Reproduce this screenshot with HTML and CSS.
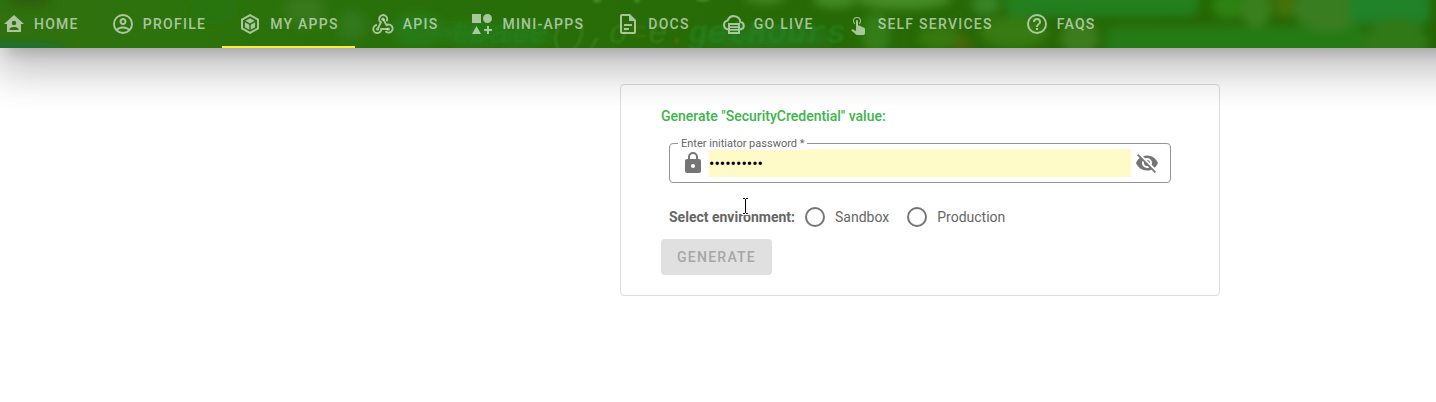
FILE: index.html
```html
<!DOCTYPE html>
<html lang="en">
<head>
<meta charset="utf-8">
<meta name="viewport" content="width=device-width, initial-scale=1">
<title>My Apps</title>
<link rel="stylesheet" href="styles.css">
</head>
<body>
<div class="page">
<header class="topbar">
  <svg class="backdrop" viewBox="0 0 1436 48" preserveAspectRatio="xMidYMid slice" aria-hidden="true">
    <defs>
      <linearGradient id="base" x1="0" x2="1" y1="0" y2="0">
        <stop offset="0" stop-color="#30700f"/>
        <stop offset="0.12" stop-color="#2d730c"/>
        <stop offset="0.25" stop-color="#29700a"/>
        <stop offset="0.5" stop-color="#276b06"/>
        <stop offset="1" stop-color="#246503"/>
      </linearGradient>
      <filter id="soft" x="-20%" y="-50%" width="140%" height="200%"><feGaussianBlur stdDeviation="6"/></filter>
      <filter id="mid" x="-20%" y="-50%" width="140%" height="200%" color-interpolation-filters="sRGB"><feGaussianBlur stdDeviation="5"/></filter>
      <filter id="fine" x="-20%" y="-50%" width="140%" height="200%"><feGaussianBlur stdDeviation="1"/></filter>
    </defs>
    <rect width="1436" height="48" fill="url(#base)"/>
    <g filter="url(#soft)">
      <ellipse cx="15" cy="52" rx="50" ry="7" fill="#14704a"/>
      <ellipse cx="30" cy="-2" rx="22" ry="7" fill="#2b5a08"/>
      <ellipse cx="214" cy="10" rx="24" ry="14" fill="#25740f"/>
      <ellipse cx="305" cy="10" rx="20" ry="16" fill="#38791a"/>
      <ellipse cx="352" cy="26" rx="14" ry="16" fill="#33781a"/>
      <ellipse cx="418" cy="30" rx="26" ry="18" fill="#287a16"/>
      <ellipse cx="470" cy="34" rx="30" ry="12" fill="#267a18"/>
      <ellipse cx="520" cy="36" rx="30" ry="10" fill="#267a18"/>
      <ellipse cx="765" cy="38" rx="70" ry="9" fill="#25791a"/>
    </g>
    <text class="code-text" x="450" y="43" filter="url(#fine)"><tspan fill="#27801d">tDate</tspan><tspan fill="#3b8220">(),o</tspan><tspan fill="#4b6d0a">=</tspan><tspan fill="#3b8220">e</tspan><tspan fill="#5d6b0a">.</tspan><tspan fill="#258020" font-weight="700">getHours</tspan></text>
    <g filter="url(#fine)" fill="#43852a">
      <ellipse cx="597" cy="0" rx="4" ry="3"/>
      <ellipse cx="637" cy="0" rx="3" ry="3"/>
      <ellipse cx="703" cy="-1" rx="7" ry="3"/>
    </g>
    <g filter="url(#mid)">
      <ellipse cx="765" cy="-3" rx="20" ry="7" fill="#438525"/>
      <ellipse cx="835" cy="-1" rx="22" ry="9" fill="#438a25"/>
      <ellipse cx="904" cy="-1" rx="48" ry="10" fill="#468c27"/>
      <ellipse cx="876" cy="34" rx="14" ry="22" fill="#347d18"/>
      <ellipse cx="940" cy="38" rx="22" ry="12" fill="#37790f"/>
      <ellipse cx="962" cy="44" rx="9" ry="8" fill="#4a650a"/>
      <ellipse cx="986" cy="4" rx="14" ry="11" fill="#388428"/>
      <rect x="1005" y="-12" width="194" height="28" rx="10" fill="#22801f"/>
      <ellipse cx="1014" cy="32" rx="34" ry="16" fill="#377b12"/>
      <ellipse cx="1080" cy="38" rx="19" ry="18" fill="#3b7d1d"/>
      <rect x="1106" y="26" width="260" height="34" rx="10" fill="#257a16"/>
      <ellipse cx="1228" cy="5" rx="16" ry="14" fill="#2d8212"/>
      <ellipse cx="1256" cy="8" rx="16" ry="20" fill="#3a7f1d"/>
      <ellipse cx="1284" cy="2" rx="10" ry="16" fill="#46720a"/>
      <ellipse cx="1328" cy="8" rx="36" ry="24" fill="#387d20"/>
      <rect x="1350" y="-12" width="80" height="36" rx="8" fill="#208229"/>
      <ellipse cx="1396" cy="44" rx="32" ry="26" fill="#317817"/>
    </g>
  </svg>
  <nav class="tabs" aria-label="Main">
    <a class="tab" href="#home">
      <svg class="icon" viewBox="0 0 24 24" aria-hidden="true"><path d="M12,3L2,12H5V20H19V12H22L12,3M12,8.75A2.25,2.25 0 0,1 14.25,11A2.25,2.25 0 0,1 12,13.25A2.25,2.25 0 0,1 9.75,11A2.25,2.25 0 0,1 12,8.75M12,15C13.5,15 16.5,15.75 16.5,17.25V18H7.5V17.25C7.5,15.75 10.5,15 12,15Z"/></svg>
      <span>HOME</span>
    </a>
    <a class="tab" href="#profile">
      <svg class="icon" viewBox="0 0 24 24" aria-hidden="true"><path d="M12,2A10,10 0 0,0 2,12A10,10 0 0,0 12,22A10,10 0 0,0 22,12A10,10 0 0,0 12,2M7.07,18.28C7.5,17.38 10.12,16.5 12,16.5C13.88,16.5 16.5,17.38 16.93,18.28C15.57,19.36 13.86,20 12,20C10.14,20 8.43,19.36 7.07,18.28M18.36,16.83C16.93,15.09 13.46,14.5 12,14.5C10.54,14.5 7.07,15.09 5.64,16.83C4.62,15.5 4,13.82 4,12C4,7.59 7.59,4 12,4C16.41,4 20,7.59 20,12C20,13.82 19.38,15.5 18.36,16.83M12,6C10.06,6 8.5,7.56 8.5,9.5C8.5,11.44 10.06,13 12,13C13.94,13 15.5,11.44 15.5,9.5C15.5,7.56 13.94,6 12,6M12,11A1.5,1.5 0 0,1 10.5,9.5A1.5,1.5 0 0,1 12,8A1.5,1.5 0 0,1 13.5,9.5A1.5,1.5 0 0,1 12,11Z"/></svg>
      <span>PROFILE</span>
    </a>
    <a class="tab tab-active" href="#my-apps" aria-current="page">
      <svg class="icon" viewBox="0 0 24 24" aria-hidden="true"><path class="line" d="M12,3.1L20,7.5V16.5L12,20.9L4,16.5V7.5Z"/><path d="M12,6.2L16.6,8.8L12,11.4L7.4,8.8ZM6.9,10.3L11.3,12.8V17.7L6.9,15.2ZM17.1,10.3L12.7,12.8V17.7L17.1,15.2Z"/></svg>
      <span>MY APPS</span>
    </a>
    <a class="tab" href="#apis">
      <svg class="icon" viewBox="0 0 24 24" aria-hidden="true"><g class="line"><path d="M15.6,9.2A4,4 0 1,0 9.9,10.4L7.2,15.9"/><path d="M12.4,7.4L15.5,13.2A4,4 0 1,1 14.6,19.2"/><path d="M6,13A4,4 0 1,0 10.3,17H17"/></g><circle cx="12" cy="7.2" r="1.6"/><circle cx="6.6" cy="17" r="1.6"/><circle cx="17.3" cy="17" r="1.6"/></svg>
      <span>APIS</span>
    </a>
    <a class="tab" href="#mini-apps">
      <svg class="icon" viewBox="0 0 24 24" aria-hidden="true"><path d="M2,2V11H11V2H2M17.5,2C15,2 13,4 13,6.5C13,9 15,11 17.5,11C20,11 22,9 22,6.5C22,4 20,2 17.5,2M6.5,14L2,22H11L6.5,14M19,17H22V19H19V22H17V19H14V17H17V14H19V17Z"/></svg>
      <span>MINI-APPS</span>
    </a>
    <a class="tab" href="#docs">
      <svg class="icon" viewBox="0 0 24 24" aria-hidden="true"><path d="M6,2A2,2 0 0,0 4,4V20A2,2 0 0,0 6,22H18A2,2 0 0,0 20,20V8L14,2H6M6,4H13V9H18V20H6V4M8,12V14H16V12H8M8,16V18H13V16H8Z"/></svg>
      <span>DOCS</span>
    </a>
    <a class="tab" href="#go-live">
      <svg class="icon" viewBox="0 0 24 24" aria-hidden="true"><path class="line" d="M6,17.2H5.4A4.4,4.4 0 0,1 5.6,8.6A6.6,6.6 0 0,1 18.4,10A3.7,3.7 0 0,1 19.2,17.2H18"/><path fill-rule="evenodd" d="M6,11H18V22H6ZM8,13V14.2H16V13ZM8,15.9V17.1H16V15.9ZM8,18.8V20H16V18.8Z"/></svg>
      <span>GO LIVE</span>
    </a>
    <a class="tab" href="#self-services">
      <svg class="icon" viewBox="0 0 24 24" aria-hidden="true"><path d="M10,9A1,1 0 0,1 11,8A1,1 0 0,1 12,9V13.47L13.21,13.6L18.15,15.79C18.68,16.03 19,16.56 19,17.14V21.5C18.97,22.32 18.32,22.97 17.5,23H11C10.62,23 10.26,22.85 10,22.57L5.1,18.37L5.84,17.6C6.03,17.39 6.3,17.28 6.58,17.28H6.8L10,19V9M11,5A4,4 0 0,1 15,9C15,10.5 14.2,11.77 13,12.46V11.24C13.61,10.69 14,9.89 14,9A3,3 0 0,0 11,6A3,3 0 0,0 8,9C8,9.89 8.39,10.69 9,11.24V12.46C7.8,11.77 7,10.5 7,9A4,4 0 0,1 11,5Z"/></svg>
      <span>SELF SERVICES</span>
    </a>
    <a class="tab" href="#faqs">
      <svg class="icon" viewBox="0 0 24 24" aria-hidden="true"><path d="M11,18H13V16H11V18M12,2A10,10 0 0,0 2,12A10,10 0 0,0 12,22A10,10 0 0,0 22,12A10,10 0 0,0 12,2M12,20C7.59,20 4,16.41 4,12C4,7.59 7.59,4 12,4C16.41,4 20,7.59 20,12C20,16.41 16.41,20 12,20M12,6A4,4 0 0,0 8,10H10A2,2 0 0,1 12,8A2,2 0 0,1 14,10C14,12 11,11.75 11,15H13C13,12.75 16,12.5 16,10A4,4 0 0,0 12,6Z"/></svg>
      <span>FAQS</span>
    </a>
  </nav>
</header>
<main class="content">
  <form class="card">
    <h1 class="card-title">Generate "SecurityCredential" value:</h1>
    <div class="field">
      <label class="field-label" for="password">Enter initiator password *</label>
      <svg class="icon" viewBox="0 0 24 24" aria-hidden="true"><path d="M12,17A2,2 0 0,0 14,15C14,13.89 13.1,13 12,13A2,2 0 0,0 10,15A2,2 0 0,0 12,17M18,8A2,2 0 0,1 20,10V20A2,2 0 0,1 18,22H6A2,2 0 0,1 4,20V10C4,8.89 4.9,8 6,8H7V6A5,5 0 0,1 12,1A5,5 0 0,1 17,6V8H18M12,3A3,3 0 0,0 9,6V8H15V6A3,3 0 0,0 12,3Z"/></svg>
      <input class="field-input" id="password" type="password" value="initiator1" autocomplete="off">
      <button class="icon-button" type="button" aria-label="Show password">
        <svg class="icon" viewBox="0 0 24 24" aria-hidden="true"><path d="M11.83,9L15,12.16C15,12.11 15,12.05 15,12A3,3 0 0,0 12,9C11.94,9 11.89,9 11.83,9M7.53,9.8L9.08,11.35C9.03,11.56 9,11.77 9,12A3,3 0 0,0 12,15C12.22,15 12.44,14.97 12.65,14.92L14.2,16.47C13.53,16.8 12.79,17 12,17A5,5 0 0,1 7,12C7,11.21 7.2,10.47 7.53,9.8M2,4.27L4.28,6.55L4.73,7C3.08,8.3 1.78,10 1,12C2.73,16.39 7,19.5 12,19.5C13.55,19.5 15.03,19.2 16.38,18.66L16.81,19.08L19.73,22L21,20.73L3.27,3M12,7A5,5 0 0,1 17,12C17,12.64 16.87,13.26 16.64,13.82L19.57,16.75C21.07,15.5 22.27,13.86 23,12C21.27,7.61 17,4.5 12,4.5C10.6,4.5 9.26,4.75 8,5.2L10.17,7.35C10.74,7.13 11.35,7 12,7Z"/></svg>
      </button>
    </div>
    <div class="environment" role="radiogroup" aria-labelledby="env-label">
      <span class="environment-label" id="env-label">Select environment:</span>
      <label class="option"><input class="radio" type="radio" name="env" value="sandbox">Sandbox</label>
      <label class="option"><input class="radio" type="radio" name="env" value="production">Production</label>
      <svg class="pointer" viewBox="0 0 9 18" aria-hidden="true"><path class="pointer-halo" d="M1,1.5H8M4.5,1.5V16.5M1,16.5H8"/><path class="pointer-beam" d="M2,1.5H4M5,1.5H7M4.5,2V16M2,16.5H4M5,16.5H7"/></svg>
    </div>
    <button class="generate" type="submit" disabled>GENERATE</button>
  </form>
</main>
</div>
</body>
</html>
```
FILE: styles.css
```css
* {
  box-sizing: border-box;
}

body {
  margin: 0;
  background: #fff;
  color: #666;
  font-family: Roboto, "Liberation Sans", sans-serif;
  font-size: 14px;
  line-height: 20px;
}

.page {
  min-height: 100vh;
  overflow: hidden;
}

.icon {
  flex: none;
  display: block;
  width: 24px;
  height: 24px;
  fill: currentColor;
}

.line {
  fill: none;
  stroke: currentColor;
  stroke-width: 2;
}

.topbar {
  position: relative;
  z-index: 1;
}

/* The shadow runs past the right edge so that it fades on the left only. */
.topbar::before {
  content: "";
  position: absolute;
  inset: 0 -80px 0 0;
  background: #276b06;
  box-shadow:
    0 11px 15px -7px rgba(0, 0, 0, 0.2),
    0 24px 38px 3px rgba(0, 0, 0, 0.14),
    0 9px 46px 8px rgba(0, 0, 0, 0.12);
}

.backdrop {
  position: absolute;
  inset: 0;
  width: 100%;
  height: 100%;
}

.code-text {
  font-family: "Liberation Mono", monospace;
  font-size: 33px;
  font-style: italic;
  opacity: 0.7;
}

.tabs {
  position: relative;
  display: flex;
  margin-left: -14px;
}

.tab {
  flex: none;
  display: flex;
  align-items: center;
  gap: 8px;
  height: 48px;
  padding: 2px 16px 0;
  border-bottom: 2px solid transparent;
  color: rgba(255, 255, 255, 0.6);
  font-weight: 500;
  letter-spacing: 0.09em;
  text-decoration: none;
  white-space: nowrap;
}

.tab-active {
  border-bottom-color: #ffeb3b;
}

.content {
  padding: 36px 0 36px 404px;
}

.card {
  display: flex;
  flex-direction: column;
  align-items: flex-start;
  max-width: 600px;
  margin: 0 auto;
  padding: 21px 40px 20px;
  border: 1px solid #dcdcdc;
  border-radius: 4px;
}

.card-title {
  margin: 0 0 17px;
  color: #3bb54a;
  font-size: 14px;
  font-weight: 500;
  line-height: 20px;
}

.field {
  position: relative;
  align-self: stretch;
  display: flex;
  align-items: center;
  gap: 4px;
  height: 40px;
  margin: 0 8px 22px;
  padding: 0 11px;
  border: 1px solid #949494;
  border-radius: 4px;
  color: #757575;
}

.field-label {
  position: absolute;
  top: -6px;
  left: 8px;
  padding: 0 3px;
  background: #fff;
  color: #666;
  font-size: 11px;
  line-height: 12px;
}

.field-input {
  flex: 1;
  min-width: 0;
  height: 28px;
  padding: 0;
  border: 0;
  outline: 0;
  background: #fffbc8;
  color: #000;
  font: inherit;
  font-size: 16px;
}

.icon-button {
  padding: 0;
  border: 0;
  background: none;
  color: inherit;
}

.environment {
  position: relative;
  display: flex;
  align-items: center;
  margin: 0 8px 10px;
}

.environment-label {
  margin-right: 8px;
  font-weight: 700;
}

.option {
  display: flex;
  align-items: center;
  gap: 10px;
  height: 24px;
  margin-right: 16px;
}

.radio {
  appearance: none;
  width: 20px;
  height: 20px;
  margin: 0 0 0 2px;
  border: 2px solid #757575;
  border-radius: 50%;
  background: #fff;
}

.radio:checked {
  background: #3bb54a;
}

.pointer {
  position: absolute;
  top: -8px;
  left: 72px;
  width: 9px;
  height: 18px;
  fill: none;
}

.pointer-halo {
  stroke: #fff;
  stroke-width: 3;
}

.pointer-beam {
  stroke: #000;
}

.generate {
  height: 36px;
  padding: 0 16px;
  border: 0;
  border-radius: 4px;
  background: #e0e0e0;
  color: #a6a6a6;
  font: inherit;
  font-weight: 500;
  letter-spacing: 0.09em;
}
```
